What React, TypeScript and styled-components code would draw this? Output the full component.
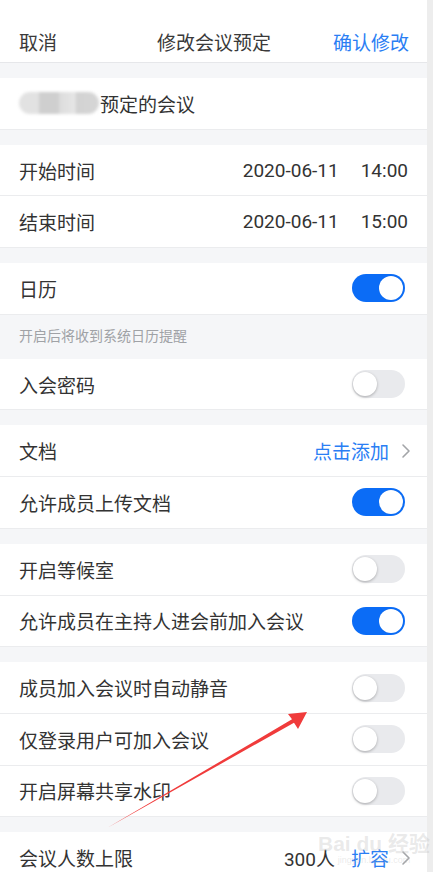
import React from "react";
import styled, { createGlobalStyle } from "styled-components";

const GlobalStyle = createGlobalStyle`
  html, body {
    margin: 0;
    padding: 0;
    background: #f5f6f8;
  }
  * {
    box-sizing: border-box;
  }
`;

const Page = styled.div`
  position: relative;
  display: flex;
  align-items: stretch;
  width: 433px;
  height: 872px;
  overflow: hidden;
  font-family: "Noto Sans CJK SC", "Noto Sans", sans-serif;
  color: #333;
`;

const Main = styled.div`
  flex: 0 0 427px;
  background: #f5f6f8;
`;

const Edge = styled.div`
  flex: 1;
  background: #ededed;
`;

const Header = styled.div`
  height: 63px;
  padding: 21px 18px 0 19px;
  display: flex;
  align-items: center;
  justify-content: space-between;
  background: #fff;
  border-bottom: 1px solid #e6e7ea;
  font-size: 19px;
`;

const HeaderLink = styled.span<{ $blue?: boolean }>`
  width: 80px;
  color: ${(p) => (p.$blue ? "#2a7ef4" : "#3a3a3a")};
  text-align: ${(p) => (p.$blue ? "right" : "left")};
`;

const Title = styled.span`
  color: #3a3a3a;
`;

const Group = styled.div`
  margin-top: 15px;
  background: #fff;
`;

const Row = styled.div`
  height: 51.7px;
  padding: 0 22px 0 19px;
  display: flex;
  align-items: center;
  justify-content: space-between;
  border-bottom: 1px solid #ebecee;
  font-size: 19px;
`;

const Label = styled.span`
  display: flex;
  align-items: center;
  white-space: nowrap;
`;

const Blur = styled.span`
  display: inline-block;
  width: 80px;
  height: 22px;
  margin-right: 1px;
  border-radius: 11px;
  background: linear-gradient(
    90deg,
    #e2e2e2 0%,
    #e2e2e2 25%,
    #cfcfcf 25%,
    #cfcfcf 50%,
    #dcdcdc 50%,
    #e6e6e6 70%,
    #d2d2d2 72%,
    #d6d6d6 100%
  );
  filter: blur(1.5px);
`;

const Value = styled.span`
  display: flex;
  align-items: center;
  gap: 22px;
  margin-right: -3px;
  font-family: Roboto, "Noto Sans CJK SC", sans-serif;
  font-size: 19px;
  color: #333;
`;

const Action = styled.span`
  display: flex;
  align-items: center;
  gap: 12px;
  margin-right: -6px;
  white-space: nowrap;
`;

const Count = styled.span`
  font-family: Roboto, "Noto Sans CJK SC", sans-serif;
  margin-right: 16px;
`;

const Blue = styled.span`
  color: #2a7ef4;
`;

const Hint = styled.div`
  height: 44px;
  padding: 0 0 3px 19px;
  display: flex;
  align-items: center;
  font-size: 14px;
  color: #a0a2a6;
  background: #f5f6f8;
`;

const Track = styled.span<{ $on?: boolean }>`
  position: relative;
  display: block;
  flex-shrink: 0;
  width: 53px;
  height: 28px;
  border-radius: 14px;
  background: ${(p) => (p.$on ? "#0b6cf6" : "#e9eaed")};
`;

const Knob = styled.span<{ $on?: boolean }>`
  position: absolute;
  top: 2px;
  left: ${(p) => (p.$on ? "27px" : "1px")};
  width: 24px;
  height: 24px;
  border-radius: 50%;
  background: #fff;
  box-shadow: ${(p) =>
    p.$on ? "0 0 1px rgba(0,0,0,0.1)" : "0 1px 3px rgba(0,0,0,0.28)"};
`;

const Overlay = styled.svg`
  position: absolute;
  left: 0;
  top: 0;
  pointer-events: none;
`;

const Watermark = styled.div`
  position: absolute;
  left: 318px;
  top: 833px;
  display: flex;
  flex-direction: column;
  align-items: center;
  white-space: nowrap;
  color: rgba(190, 190, 190, 0.32);
  font-family: "Liberation Sans", "Noto Sans CJK SC", sans-serif;
  pointer-events: none;
`;

const MarkBig = styled.span`
  font-size: 21px;
  font-weight: bold;
  line-height: 22px;
`;

const MarkSmall = styled.span`
  font-size: 9px;
  line-height: 10px;
`;

function Toggle({ on }: { on?: boolean }) {
  return (
    <Track $on={on}>
      <Knob $on={on} />
    </Track>
  );
}

function Chevron() {
  return (
    <svg width="10" height="16" viewBox="0 0 10 16">
      <polyline
        points="2,2 8,8 2,14"
        fill="none"
        stroke="#a3a5a8"
        strokeWidth="1.6"
        strokeLinecap="round"
        strokeLinejoin="round"
      />
    </svg>
  );
}

export default function App() {
  return (
    <>
      <GlobalStyle />
      <Page>
        <Main>
          <Header>
            <HeaderLink>取消</HeaderLink>
            <Title>修改会议预定</Title>
            <HeaderLink $blue>确认修改</HeaderLink>
          </Header>

          <Group>
            <Row>
              <Label>
                <Blur />
                预定的会议
              </Label>
            </Row>
          </Group>

          <Group>
            <Row>
              <Label>开始时间</Label>
              <Value>
                <span>2020-06-11</span>
                <span>14:00</span>
              </Value>
            </Row>
            <Row>
              <Label>结束时间</Label>
              <Value>
                <span>2020-06-11</span>
                <span>15:00</span>
              </Value>
            </Row>
          </Group>

          <Group>
            <Row>
              <Label>日历</Label>
              <Toggle on />
            </Row>
            <Hint>开启后将收到系统日历提醒</Hint>
            <Row>
              <Label>入会密码</Label>
              <Toggle />
            </Row>
          </Group>

          <Group>
            <Row>
              <Label>文档</Label>
              <Action>
                <Blue>点击添加</Blue>
                <Chevron />
              </Action>
            </Row>
            <Row>
              <Label>允许成员上传文档</Label>
              <Toggle on />
            </Row>
          </Group>

          <Group>
            <Row>
              <Label>开启等候室</Label>
              <Toggle />
            </Row>
            <Row>
              <Label>允许成员在主持人进会前加入会议</Label>
              <Toggle on />
            </Row>
          </Group>

          <Group>
            <Row>
              <Label>成员加入会议时自动静音</Label>
              <Toggle />
            </Row>
            <Row>
              <Label>仅登录用户可加入会议</Label>
              <Toggle />
            </Row>
            <Row>
              <Label>开启屏幕共享水印</Label>
              <Toggle />
            </Row>
          </Group>

          <Group>
            <Row>
              <Label>会议人数上限</Label>
              <Action>
                <span>
                  <Count>300人</Count>
                  <Blue>扩容</Blue>
                </span>
                <Chevron />
              </Action>
            </Row>
          </Group>
        </Main>
        <Edge />

        <Overlay width="433" height="872" viewBox="0 0 433 872">
          <polygon
            points="107,828 292,719.3 288,714 307,712 298,729 294,722.7"
            fill="#f03b3b"
          />
        </Overlay>

        <Watermark>
          <MarkBig>Bai du 经验</MarkBig>
          <MarkSmall>jingyan.baidu.com</MarkSmall>
        </Watermark>
      </Page>
    </>
  );
}
